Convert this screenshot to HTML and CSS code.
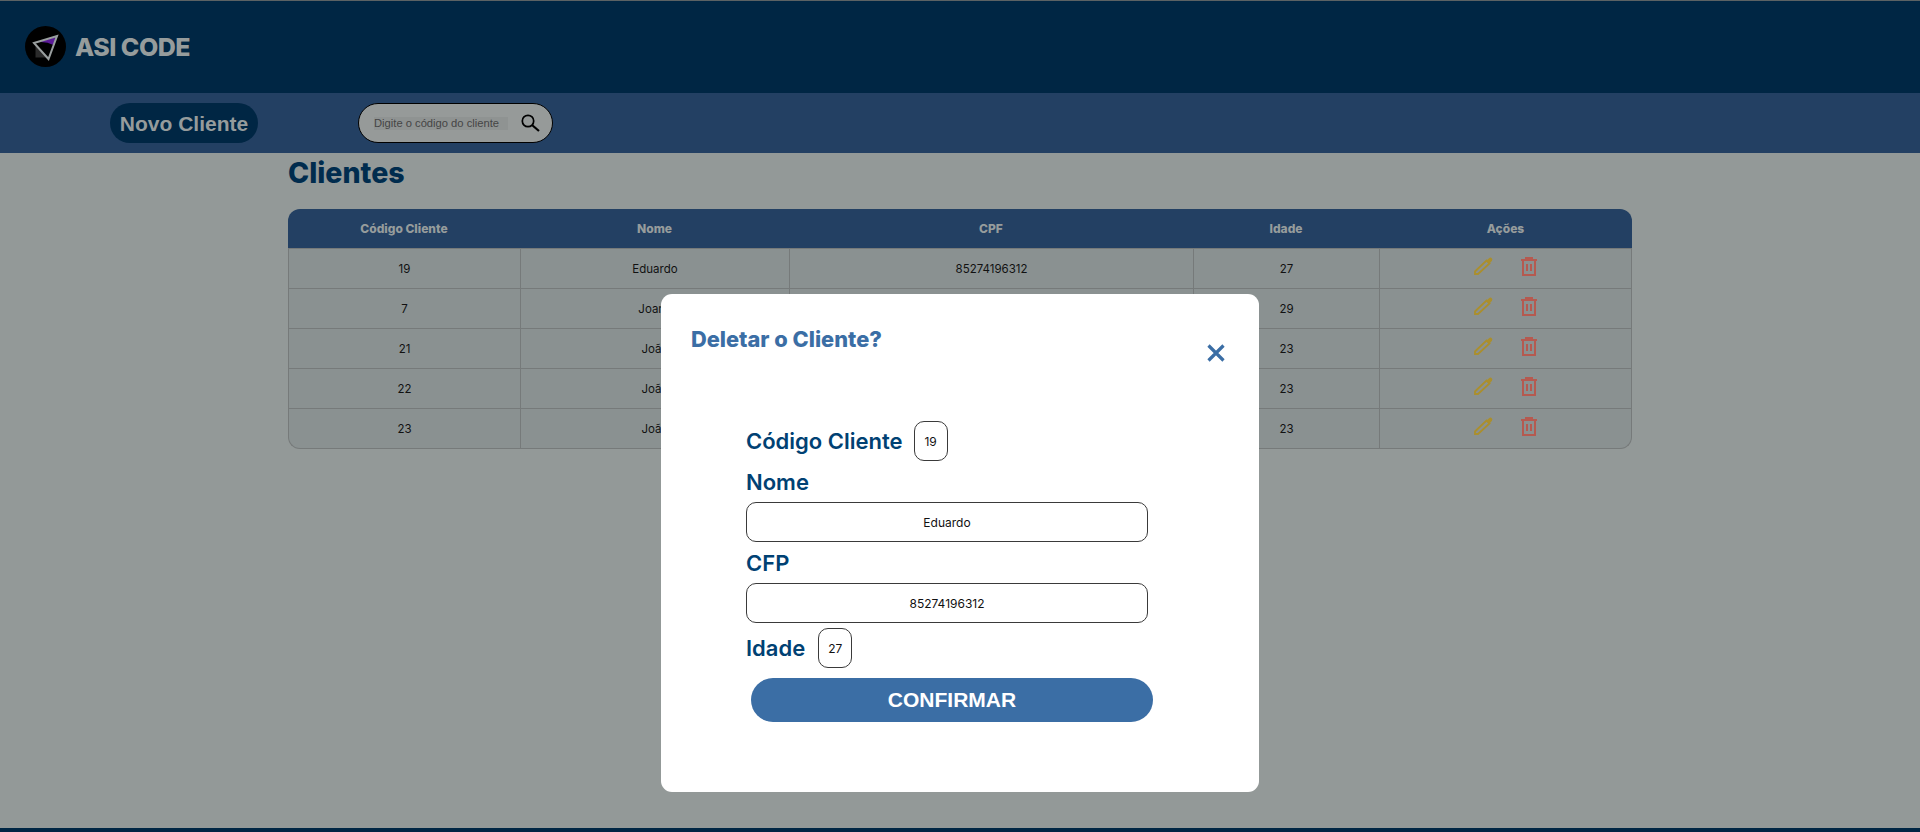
FILE: index.html
```html
<!DOCTYPE html>
<html lang="pt-BR">
<head>
    <meta charset="UTF-8">
    <meta name="viewport" content="width=device-width, initial-scale=1.0">
    <title>Clientes</title>
    <link rel="stylesheet" href="styles.css">
</head>
<body>
    <header class="topo">
        <div class="logo">
            <svg viewBox="0 0 41 41" width="41" height="41">
                <circle cx="20.500" cy="20.500" r="20.500" fill="#000"/>
                <path d="M10.500 19.500 L10.500 31.500 L22 31.500 Z" fill="#2b2b2b"/>
                <path d="M14 16 L31 11 L28.500 19 Q22 15.500 14 16 Z" fill="#5a1a96"/>
                <path d="M9 17 L32 10 L23.500 33 Z" fill="none" stroke="#9a9f9f" stroke-width="2"/>
            </svg>
        </div>
        <span class="marca">ASI CODE</span>
    </header>

    <nav class="barra">
        <button class="novo">Novo Cliente</button>
        <div class="busca">
            <span class="busca-texto">Digite o código do cliente</span>
            <svg viewBox="0 0 19 18" width="19" height="18">
                <circle cx="7" cy="7" r="5.700" fill="none" stroke="#000" stroke-width="1.700"/>
                <path d="M11 11 L18 17" stroke="#000" stroke-width="2.200"/>
            </svg>
        </div>
    </nav>

    <main class="conteudo">
        <h1>Clientes</h1>
        <table class="tabela">
            <colgroup>
                <col class="col-cod"><col class="col-nome"><col class="col-cpf"><col class="col-idade"><col class="col-acoes">
            </colgroup>
            <thead>
                <tr><th>Código Cliente</th><th>Nome</th><th>CPF</th><th>Idade</th><th>Ações</th></tr>
            </thead>
            <tbody>
                <tr>
                    <td>19</td><td>Eduardo</td><td>85274196312</td><td>27</td>
                    <td class="acoes">
                        <svg class="ic-edit" viewBox="0 0 19 18"><path class="lapis" d="M1 17 L1 14.500 L12.500 3.500 L15.500 6.500 L4 17 Z"/><path class="ponta" d="M12.500 3.500 L15 1.200 Q16.500 0 17.800 1.200 Q19 2.600 17.800 3.900 L15.500 6.500 Z"/></svg>
                        <svg class="ic-lixo" viewBox="0 0 16 19"><path d="M0 3 H16 M5 3 V1 H11 V3 M2 3 V18 H14 V3 M6 7 V14 M10 7 V14"/></svg>
                    </td>
                </tr>
                <tr>
                    <td>7</td><td>Joana</td><td>85274196312</td><td>29</td>
                    <td class="acoes">
                        <svg class="ic-edit" viewBox="0 0 19 18"><path class="lapis" d="M1 17 L1 14.500 L12.500 3.500 L15.500 6.500 L4 17 Z"/><path class="ponta" d="M12.500 3.500 L15 1.200 Q16.500 0 17.800 1.200 Q19 2.600 17.800 3.900 L15.500 6.500 Z"/></svg>
                        <svg class="ic-lixo" viewBox="0 0 16 19"><path d="M0 3 H16 M5 3 V1 H11 V3 M2 3 V18 H14 V3 M6 7 V14 M10 7 V14"/></svg>
                    </td>
                </tr>
                <tr>
                    <td>21</td><td>João</td><td>85274196312</td><td>23</td>
                    <td class="acoes">
                        <svg class="ic-edit" viewBox="0 0 19 18"><path class="lapis" d="M1 17 L1 14.500 L12.500 3.500 L15.500 6.500 L4 17 Z"/><path class="ponta" d="M12.500 3.500 L15 1.200 Q16.500 0 17.800 1.200 Q19 2.600 17.800 3.900 L15.500 6.500 Z"/></svg>
                        <svg class="ic-lixo" viewBox="0 0 16 19"><path d="M0 3 H16 M5 3 V1 H11 V3 M2 3 V18 H14 V3 M6 7 V14 M10 7 V14"/></svg>
                    </td>
                </tr>
                <tr>
                    <td>22</td><td>João</td><td>85274196312</td><td>23</td>
                    <td class="acoes">
                        <svg class="ic-edit" viewBox="0 0 19 18"><path class="lapis" d="M1 17 L1 14.500 L12.500 3.500 L15.500 6.500 L4 17 Z"/><path class="ponta" d="M12.500 3.500 L15 1.200 Q16.500 0 17.800 1.200 Q19 2.600 17.800 3.900 L15.500 6.500 Z"/></svg>
                        <svg class="ic-lixo" viewBox="0 0 16 19"><path d="M0 3 H16 M5 3 V1 H11 V3 M2 3 V18 H14 V3 M6 7 V14 M10 7 V14"/></svg>
                    </td>
                </tr>
                <tr>
                    <td>23</td><td>João</td><td>85274196312</td><td>23</td>
                    <td class="acoes">
                        <svg class="ic-edit" viewBox="0 0 19 18"><path class="lapis" d="M1 17 L1 14.500 L12.500 3.500 L15.500 6.500 L4 17 Z"/><path class="ponta" d="M12.500 3.500 L15 1.200 Q16.500 0 17.800 1.200 Q19 2.600 17.800 3.900 L15.500 6.500 Z"/></svg>
                        <svg class="ic-lixo" viewBox="0 0 16 19"><path d="M0 3 H16 M5 3 V1 H11 V3 M2 3 V18 H14 V3 M6 7 V14 M10 7 V14"/></svg>
                    </td>
                </tr>
            </tbody>
        </table>
    </main>

    <footer class="rodape"></footer>

    <!-- Modal de exclusao -->
    <section class="modal">
        <div class="modal-topo">
            <h2>Deletar o Cliente?</h2>
            <svg class="fechar" viewBox="0 0 18 18" width="18" height="18">
                <path d="M1.500 1.500 L16.500 16.500 M16.500 1.500 L1.500 16.500"/>
            </svg>
        </div>
        <form class="modal-form">
            <div class="linha">
                <label>Código Cliente</label>
                <div class="campo campo-curto">19</div>
            </div>
            <label class="label-campo">Nome</label>
            <div class="campo campo-longo">Eduardo</div>
            <label class="label-campo">CFP</label>
            <div class="campo campo-longo">85274196312</div>
            <div class="linha linha-idade">
                <label>Idade</label>
                <div class="campo campo-curto">27</div>
            </div>
            <button type="button" class="confirmar">CONFIRMAR</button>
        </form>
    </section>
</body>
</html>
```

FILE: styles.css
```css
* {
    box-sizing: border-box;
}

body {
    margin: 0;
    min-height: 100vh;
    display: flex;
    flex-direction: column;
    font-family: Inter, "Open Sans", sans-serif;
    background-color: #939998;
    color: #111;
}

.topo {
    height: 93px;
    background-color: #002644;
    border-top: 1px solid #5c6264;
    display: flex;
    align-items: center;
    gap: 9px;
    padding-left: 25px;
    padding-bottom: 1px;
}

.logo {
    display: flex;
}

.marca {
    font-size: 25px;
    font-weight: 800;
    color: #969c9c;
    letter-spacing: -0.5px;
}

.barra {
    height: 60px;
    background-color: #234063;
    display: flex;
    align-items: center;
    padding-left: 110px;
}

.novo {
    width: 148px;
    height: 40px;
    border: none;
    border-radius: 20px;
    background-color: #002644;
    color: #969c9c;
    font-family: "Liberation Sans", Arial, sans-serif;
    font-size: 21px;
    font-weight: 700;
    padding: 2px 0 0 0;
}

.busca {
    width: 195px;
    height: 40px;
    margin-left: 100px;
    border: 1px solid #000;
    border-radius: 20px;
    background-color: #969a99;
    display: flex;
    align-items: center;
    gap: 13px;
    padding-left: 15px;
}

.busca-texto {
    width: 134px;
    background-color: #8f9392;
    color: #454545;
    font-family: "Liberation Sans", Arial, sans-serif;
    font-size: 11.200px;
    line-height: 13px;
    white-space: nowrap;
}

.conteudo {
    flex: 1;
    padding-left: 288px;
}

h1 {
    margin: 0;
    font-size: 28.500px;
    font-weight: 800;
    line-height: 40px;
    color: #002c4e;
}

.tabela {
    width: 1344px;
    margin-top: 16px;
    border-collapse: separate;
    border-spacing: 0;
    table-layout: fixed;
    font-size: 11.500px;
    text-align: center;
}

.col-cod { width: 232px; }
.col-nome { width: 269px; }
.col-cpf { width: 404px; }
.col-idade { width: 186px; }
.col-acoes { width: 253px; }

.tabela th {
    height: 40px;
    background-color: #234063;
    color: #969c9c;
    font-size: 12px;
    font-weight: 800;
    padding: 0;
    border-bottom: 1px solid #767a7a;
}

.tabela th:first-child {
    border-top-left-radius: 12px;
}

.tabela th:last-child {
    border-top-right-radius: 12px;
}

.tabela td {
    height: 40px;
    padding: 0;
    background-color: #8a9191;
    border-bottom: 1px solid #767a7a;
    border-left: 1px solid #767a7a;
}

.tabela td:last-child {
    border-right: 1px solid #767a7a;
}

.tabela tbody tr:last-child td:first-child {
    border-bottom-left-radius: 12px;
}

.tabela tbody tr:last-child td:last-child {
    border-bottom-right-radius: 12px;
}

.acoes svg {
    margin-bottom: 5px;
    vertical-align: middle;
}

.ic-edit {
    width: 19px;
    height: 18px;
    margin-right: 24px;
}

.lapis {
    fill: none;
    stroke: #ab8f2d;
    stroke-width: 1.800;
}

.ponta {
    fill: #ab8f2d;
}

.ic-lixo {
    width: 16px;
    height: 19px;
    fill: none;
    stroke: #b55a50;
    stroke-width: 2;
}

.rodape {
    height: 4px;
    background-color: #002644;
}

/* modal por cima da pagina */
.modal {
    position: absolute;
    left: 661px;
    top: 294px;
    width: 598px;
    height: 498px;
    background-color: #fff;
    border-radius: 11px;
    padding: 30px 34px 0 30px;
}

.modal-topo {
    display: flex;
    justify-content: space-between;
}

.modal h2 {
    margin: 0;
    font-size: 21.800px;
    font-weight: 800;
    line-height: 30px;
    color: #3b6ea5;
}

.fechar {
    margin-top: 20px;
    fill: none;
    stroke: #3b6ea5;
    stroke-width: 3.200;
}

.modal-form {
    display: flex;
    flex-direction: column;
    align-items: flex-start;
    margin-top: 59px;
    padding-left: 55px;
}

.linha {
    display: flex;
    align-items: center;
    gap: 11px;
}

.linha-idade {
    margin-top: 5px;
    gap: 13px;
}

.modal-form label {
    font-size: 22px;
    font-weight: 600;
    line-height: 30px;
    color: #004173;
}

.campo {
    height: 40px;
    border: 1px solid #3a3a3a;
    border-radius: 10px;
    background-color: #fff;
    color: #111;
    font-size: 12px;
    display: flex;
    align-items: center;
    justify-content: center;
}

.campo-curto {
    width: 34px;
}

.campo-longo {
    width: 402px;
}

.modal-form .label-campo {
    margin-top: 6px;
    margin-bottom: 5px;
}

.confirmar {
    width: 402px;
    height: 44px;
    margin: 10px 0 0 5px;
    border: none;
    border-radius: 22px;
    background-color: #3b6ea5;
    color: #fff;
    font-family: "Liberation Sans", Arial, sans-serif;
    font-size: 21px;
    font-weight: 700;
    padding: 0;
}
```
